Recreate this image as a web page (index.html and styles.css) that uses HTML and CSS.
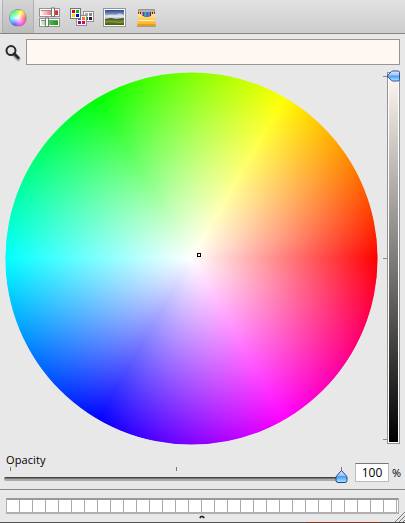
FILE: index.html
```
<!DOCTYPE html>
<html lang="en">
<head>
<meta charset="utf-8">
<title>Colors</title>
<link rel="stylesheet" href="styles.css">
</head>
<body>
<div class="panel">
  <header class="toolbar">
    <div class="tool selected"><span class="mini-wheel"></span></div>
    <div class="tool">
      <svg width="24" height="22" viewBox="0 0 24 22">
        <defs>
          <linearGradient id="red"><stop stop-color="#fff0ef"/><stop offset="1" stop-color="#db2020"/></linearGradient>
          <linearGradient id="green"><stop stop-color="#d9f5d6"/><stop offset=".6" stop-color="#39b53c"/><stop offset="1" stop-color="#18951e"/></linearGradient>
        </defs>
        <g stroke="#939393" fill="#fff"><rect x="1.5" y="1.5" width="20" height="8"/><rect x="1.5" y="11.500" width="20" height="8"/></g>
        <rect x="3" y="4" width="17" height="4" fill="url(#red)" /><rect x="3" y="14" width="17" height="4" fill="url(#green)"/>
        <path d="M3 3.500h17" stroke="#b98484"/><path d="M3 13.500h17" stroke="#719b70"/>
        <g fill="#fff" stroke="#777"><rect x="13.500" y="1" width="3" height="8.500"/><rect x="7.500" y="11" width="3" height="8.500"/></g>
      </svg>
    </div>
    <div class="tool">
      <svg width="26" height="22" viewBox="0 0 26 22" shape-rendering="crispEdges">
        <rect x="14.500" y="4.500" width="10" height="10" fill="#fff" stroke="#909090"/>
        <path d="M16 6h3v3h-3z" fill="#aaa"/><path d="M20 6h3v3h-3z" fill="#888"/><path d="M16 10h3v3h-3z" fill="#555"/><path d="M20 10h3v3h-3z" fill="#222"/>
        <rect x="7.500" y="8.500" width="10" height="10" fill="#fff" stroke="#909090"/>
        <path d="M9 10h3v3H9z" fill="#007b98"/><path d="M13 10h3v3h-3z" fill="#ff7b00"/><path d="M9 14h3v3H9z" fill="#a5007b"/><path d="M13 14h3v3h-3z" fill="#e60072"/>
        <rect x="1.500" y="1.500" width="10" height="10" fill="#fff" stroke="#777"/>
        <path d="M3 3h3v3H3z" fill="#e00000"/><path d="M7 3h3v3H7z" fill="#00b51c"/><path d="M3 7h3v3H3z" fill="#ffd500"/><path d="M7 7h3v3H7z" fill="#0009e0"/>
      </svg>
    </div>
    <div class="tool wide">
      <svg width="24" height="22" viewBox="0 0 24 22">
        <defs>
          <linearGradient id="sky" x2="0" y2="1"><stop stop-color="#244a99"/><stop offset=".35" stop-color="#7285b7"/><stop offset=".6" stop-color="#e2dfe8"/><stop offset="1" stop-color="#a9b5c4"/></linearGradient>
          <linearGradient id="land" x2="0" y2="1"><stop stop-color="#344b26"/><stop offset=".5" stop-color="#6f8528"/><stop offset="1" stop-color="#3d5a18"/></linearGradient>
        </defs>
        <rect x=".5" y="1.500" width="22" height="18" fill="#fff" stroke="#949494"/>
        <rect x="2" y="3" width="19" height="10" fill="url(#sky)"/>
        <path d="M4 9q3-2 6-1t5-1 5 1v2H4z" fill="#f2eef3" opacity=".5"/>
        <path d="M2 12l6-1 5 1 8-1v7H2z" fill="url(#land)"/>
        <path d="M2 15q7-2 11 0t8-1" stroke="#8b9c36" fill="none"/>
      </svg>
    </div>
    <div class="tool">
      <svg width="24" height="22" viewBox="0 0 24 22">
        <defs><linearGradient id="box" x2="0" y2="1"><stop stop-color="#ffe7a0"/><stop offset=".6" stop-color="#ffc440"/><stop offset="1" stop-color="#f5aa1c"/></linearGradient></defs>
        <path d="M2 19.500h19" stroke="#888" opacity=".7"/>
        <path d="M3.500 2.500h16v12h-16z" fill="#b5b3ae" stroke="#979590"/>
        <path d="M3 5h17v5H3z" fill="#f0bd5c"/>
        <g stroke-width="1" shape-rendering="crispEdges"><path d="M3.500 5v2M19.500 5v2" stroke="#b5322b"/><path d="M5.500 5v2M17.500 5v2" stroke="#333"/><path d="M7.500 5v4" stroke="#a06fc0"/><path d="M8.500 5v4" stroke="#6840a0"/><path d="M9.500 5v5" stroke="#35a070"/><path d="M10.500 5v5" stroke="#2bb6b0"/><path d="M11.500 5v5" stroke="#4b71d4"/><path d="M12.500 5v5" stroke="#6c55c6"/><path d="M13.500 5v5" stroke="#9f5bd6"/><path d="M14.500 5v5" stroke="#4a8bb9"/><path d="M15.500 5v4" stroke="#273a70"/></g>
        <path d="M3 7h3q1 3 3 3h5q2 0 3-3h3v5l1 7H2l1-7z" fill="url(#box)"/><path d="M3.500 13.500h16" stroke="#fff0b8"/><path d="M2.500 18h18" stroke="#d68a18"/>
      </svg>
    </div>
  </header>

  <div class="picker-row">
    <svg class="magnifier" width="18" height="18" viewBox="0 0 18 18">
      <path d="M9.800 10.300l4.500 4.500" stroke="#aaa" stroke-width="4.500" stroke-linecap="round"/>
      <circle cx="7" cy="6.600" r="4.500" fill="#e5e5e5" stroke="#292929" stroke-width="2"/>
      <path d="M10.200 9.800l4 4" stroke="#292929" stroke-width="2.800" stroke-linecap="round"/>
    </svg>
    <div class="current-color"></div>
  </div>

  <main class="color-area">
    <div class="wheel"><span class="crosshair"></span></div>
    <div class="brightness">
      <div class="ticks"><i></i><i></i><i></i></div>
      <div class="bar"></div>
      <svg class="thumb" width="15" height="13" viewBox="0 0 15 13">
        <defs><linearGradient id="aqua" x2="0" y2="1"><stop stop-color="#e1edff"/><stop offset=".42" stop-color="#9dc4f8"/><stop offset=".5" stop-color="#4c9cf0"/><stop offset="1" stop-color="#a4ecff"/></linearGradient></defs>
        <path d="M1 6L5.500 1.500Q6 1 7 1h5q1.500 0 1.500 1.500v7q0 1.500-1.500 1.500H7q-1 0-1.500-.5z" fill="url(#aqua)" stroke="#3b4ba5"/>
      </svg>
    </div>
  </main>

  <section class="opacity">
    <div class="opacity-slider">
      <label>Opacity</label>
      <div class="opacity-ticks"><i></i><i></i></div>
      <div class="track"></div>
      <svg class="knob" width="14" height="17" viewBox="0 0 14 17">
        <path d="M6.500 0v5" stroke="#777"/>
        <path d="M6.500 3.500L2 8.500Q1 9.500 1 11v2.500Q1 15.500 3 15.500h7q2 0 2-2V11q0-1.500-1-2.500z" fill="url(#aqua)" stroke="#303e88"/>
      </svg>
    </div>
    <div class="amount">100</div>
    <span class="percent">%</span>
  </section>

  <footer class="swatches">
    <div class="cells"></div>
    <svg class="handle" width="6" height="4" viewBox="0 0 6 4"><path d="M.8 3Q3-.2 5.200 3" fill="none" stroke="#222" stroke-width="1.700"/></svg>
    <svg class="grip" width="11" height="11" viewBox="0 0 11 11"><path d="M1 11L11 1M5 11l6-6M9 11l2-2" stroke="#777"/></svg>
  </footer>
  <div class="window-edge"></div>
</div>
</body>
</html>
```
FILE: styles.css
```
* { box-sizing: border-box; }
body { margin: 0; overflow: hidden; font: 500 11px/14px "Open Sans", "Noto Sans", sans-serif; color: #000; }
svg { display: block; }
.panel { width: 405px; height: 523px; display: flex; flex-direction: column; background: #e8e8e8; }

.toolbar { height: 34px; flex: none; display: flex; padding-left: 2px; background: linear-gradient(#e2e2e2, #cdcdcd); border-bottom: 1px solid #858585; }
.tool { width: 32px; display: flex; align-items: center; justify-content: center; padding-top: 3px; }
.tool.wide { width: 33px; justify-content: flex-end; padding-right: 4px; }
.selected { background: linear-gradient(#d4d4d4, #bcbcbc); border: solid #b0b0b0; border-width: 0 1px; }
.mini-wheel { width: 18px; height: 18px; border-radius: 50%; border: 1px solid #9999; background: radial-gradient(circle closest-side, #fff, #fff0), conic-gradient(from 90deg, #f55, #f4f, #55f, #4ff, #4f4, #ff4, #f55); }

.picker-row { flex: none; display: flex; padding: 5px 5px 0 4px; height: 38px; }
.magnifier { margin: 5px 4px 0 0; }
.current-color { flex: 1; height: 26px; background: #fff8f2; border: 1px solid #969696; }

.color-area { flex: none; display: flex; height: 373px; padding-left: 5px; }
.wheel { width: 373px; height: 373px; border-radius: 50%; display: grid; place-items: center; background: radial-gradient(circle closest-side, #fff, #fff0), conic-gradient(from 90deg, #f00, #f0f, #00f, #0ff, #0f0, #ff0, #f00); clip-path: circle(186.100px); }
.crosshair { width: 4px; height: 4px; border: 1px solid #000; background: #fff; position: relative; left: 7px; top: -4px; }
.brightness { display: flex; position: relative; margin-left: 5px; height: 372px; }
.ticks { width: 4px; display: flex; flex-direction: column; justify-content: space-between; padding: 4px 0; }
.ticks i { height: 1px; background: #888; }
.bar { width: 13px; border: 1px solid #929292; padding: 1px; background: linear-gradient(#fff8f2, #000) content-box, #fff; }
.thumb { position: absolute; left: 3px; top: -2px; }

.opacity { flex: none; height: 45px; border-bottom: 1px solid #888; display: flex; }
.opacity-slider { width: 345px; margin-left: 4px; position: relative; padding-top: 8px; }
.opacity-slider label { display: block; padding-left: 2px; letter-spacing: .1px; }
.opacity-ticks { height: 4px; padding: 0 172px 0 6px; display: flex; justify-content: space-between; }
.opacity-ticks i { width: 1px; background: #777; }
.track { width: 340px; height: 4px; margin-top: 6px; border-radius: 3px; background: linear-gradient(#444 0 25%, #777 25% 50%, #aaa 50%); }
.knob { position: absolute; left: 331px; top: 22px; }
.amount { width: 34px; height: 19px; margin: 18px 0 0 6px; background: #fff; border: 1px solid #bbb; border-top-color: #777; text-align: center; font-size: 12px; line-height: 18px; }
.percent { margin: 21px 0 0 3px; }

.swatches { flex: 1; position: relative; padding: 8px 6px 0; }
.cells { width: 393px; height: 16px; border: solid #b0b0b0; border-width: 2px 1px; border-top-color: #999; background: repeating-linear-gradient(90deg, #fff 0 12px, #aaa 12px 13px); }
.handle { position: absolute; left: 199px; top: 25px; }
.grip { position: absolute; right: 0; bottom: 0; }
.window-edge { height: 1px; flex: none; background: linear-gradient(90deg, #555 0 306px, #733c2c 306px 380px, #444 380px); }
```
